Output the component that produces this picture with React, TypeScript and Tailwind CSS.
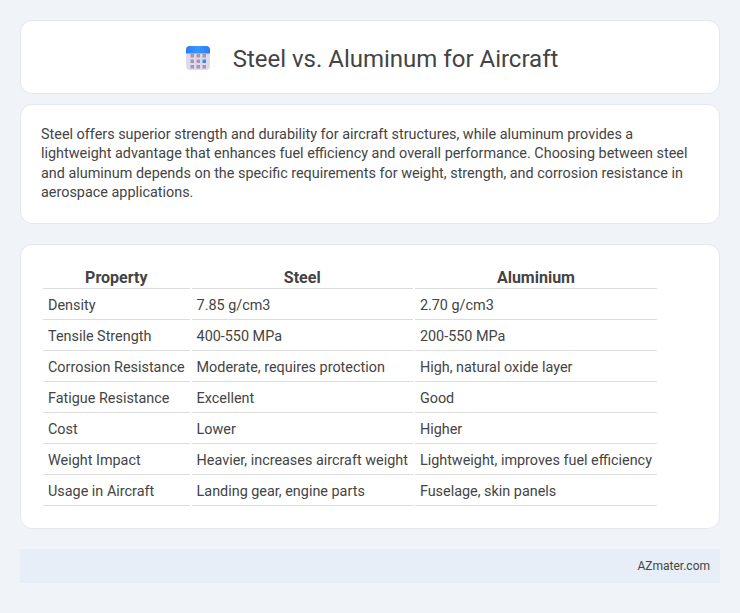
const rows = [
  ["Density", "7.85 g/cm3", "2.70 g/cm3"],
  ["Tensile Strength", "400-550 MPa", "200-550 MPa"],
  ["Corrosion Resistance", "Moderate, requires protection", "High, natural oxide layer"],
  ["Fatigue Resistance", "Excellent", "Good"],
  ["Cost", "Lower", "Higher"],
  ["Weight Impact", "Heavier, increases aircraft weight", "Lightweight, improves fuel efficiency"],
  ["Usage in Aircraft", "Landing gear, engine parts", "Fuselage, skin panels"],
];

function CalendarIcon() {
  return (
    <svg width="24" height="24" viewBox="0 0 24 24" className="shrink-0">
      <defs>
        <linearGradient id="calTop" x1="0" y1="0" x2="1" y2="0">
          <stop offset="0" stopColor="#2a7ff5" />
          <stop offset="0.5" stopColor="#3a95fa" />
          <stop offset="1" stopColor="#2a7ff5" />
        </linearGradient>
      </defs>
      <rect x="0" y="0" width="24" height="24" rx="4" fill="#e1d8ec" />
      <path d="M0 7.5V4a4 4 0 0 1 4-4h16a4 4 0 0 1 4 4v3.5z" fill="url(#calTop)" />
      {[8, 13.5, 19].map((y, j) =>
        [4.5, 10.5, 16.5].map((x, i) => (
          <rect key={`${i}-${j}`} x={x} y={y} width="3.5" height="3.5" fill={i === 2 && j === 1 ? "#2f8cf8" : "#a299ae"} />
        ))
      )}
    </svg>
  );
}

export default function App() {
  return (
    <div className="min-h-[613px] bg-[#f0f4f8] px-5 pt-5 pb-[30px] font-['Roboto',sans-serif] text-[#444]">
      <header className="flex h-[74px] items-center justify-center gap-[23px] rounded-xl border border-[#e2e8f0] bg-white pt-[2px] pl-1">
        <CalendarIcon />
        <h1 className="pt-[2px] text-2xl leading-none font-normal">Steel vs. Aluminum for Aircraft</h1>
      </header>
      <section className="mt-2.5 h-[120px] rounded-xl border border-[#e2e8f0] bg-white px-5 py-5">
        <p className="text-[14.4px] leading-[19.44px]">
          Steel offers superior strength and durability for aircraft structures, while aluminum provides a lightweight advantage that enhances fuel efficiency and overall performance. Choosing between steel and aluminum depends on the specific requirements for weight, strength, and corrosion resistance in aerospace applications.
        </p>
      </section>
      <section className="mt-5 h-[285px] rounded-xl border border-[#e2e8f0] bg-white px-5 pt-[21px]">
        <table className="border-separate border-spacing-[2px] text-[14.4px] leading-[20px]">
          <thead>
            <tr>
              {["Property", "Steel", "Aluminium"].map((h) => (
                <th key={h} className="border-b border-[#ddd] px-[5px] pt-0 pb-0 text-center text-base leading-[20px] font-bold">{h}</th>
              ))}
            </tr>
          </thead>
          <tbody>
            {rows.map((r) => (
              <tr key={r[0]}>
                {r.map((c) => (
                  <td key={c} className="border-b border-[#ddd] px-[5px] pt-[5px] pb-[3px] text-left">{c}</td>
                ))}
              </tr>
            ))}
          </tbody>
        </table>
      </section>
      <footer className="mt-5 flex h-[34px] items-center justify-end bg-[#e8eef7] px-2.5 text-xs">AZmater.com</footer>
    </div>
  );
}
